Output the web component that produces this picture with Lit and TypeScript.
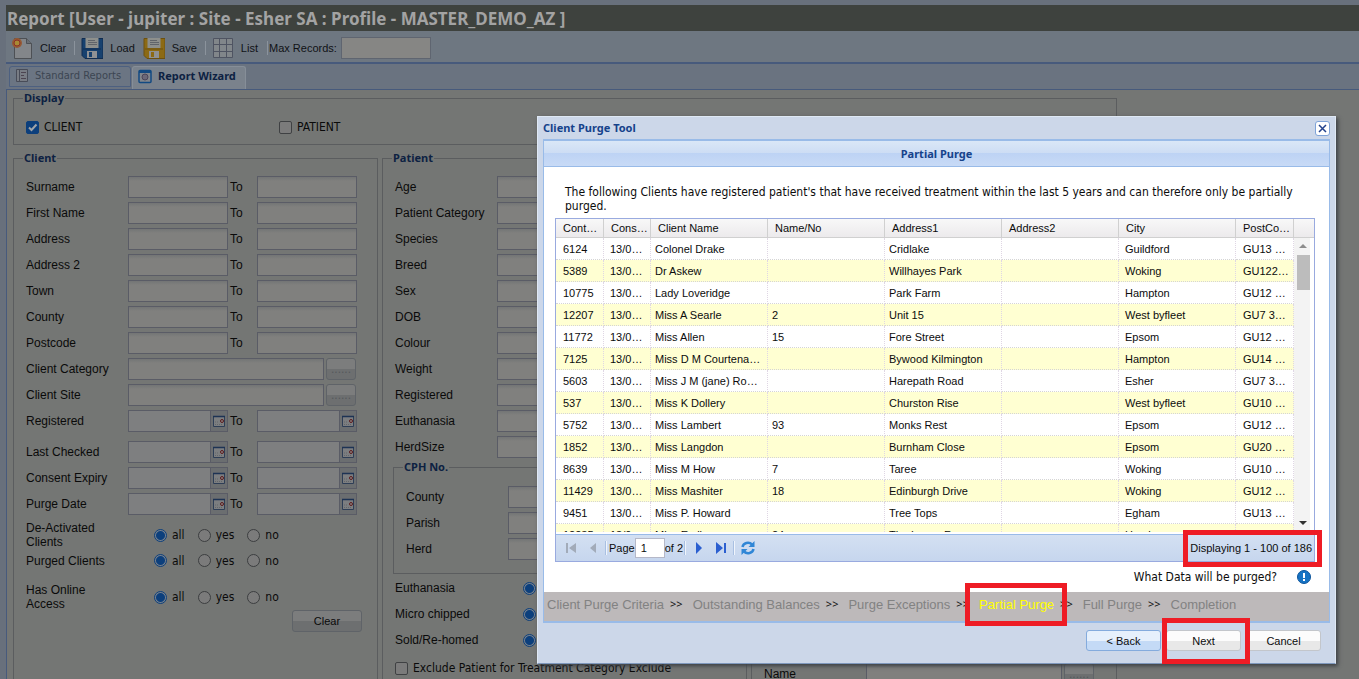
import { LitElement, html, css, svg, nothing } from "lit";
import { customElement, property, state } from "lit/decorators.js";

const CLIENTS: string[][] = [
  ["6124", "Colonel Drake", "", "Cridlake", "Guildford", "GU13 4RT"],
  ["5389", "Dr Askew", "", "Willhayes Park", "Woking", "GU122 5PL"],
  ["10775", "Lady Loveridge", "", "Park Farm", "Hampton", "GU12 6HN"],
  ["12207", "Miss A Searle", "2", "Unit 15", "West byfleet", "GU7 3RPW"],
  ["11772", "Miss Allen", "15", "Fore Street", "Epsom", "GU12 7DA"],
  ["7125", "Miss D M Courtenay-Smith", "", "Bywood Kilmington", "Hampton", "GU14 2NB"],
  ["5603", "Miss J M (jane) Robinson", "", "Harepath Road", "Esher", "GU7 3TTW"],
  ["537", "Miss K Dollery", "", "Churston Rise", "West byfleet", "GU10 8LL"],
  ["5752", "Miss Lambert", "93", "Monks Rest", "Epsom", "GU12 1EE"],
  ["1852", "Miss Langdon", "", "Burnham Close", "Epsom", "GU20 5FF"],
  ["8639", "Miss M How", "7", "Taree", "Woking", "GU10 2SA"],
  ["11429", "Miss Mashiter", "18", "Edinburgh Drive", "Woking", "GU12 9KJ"],
  ["9451", "Miss P. Howard", "", "Tree Tops", "Egham", "GU13 6WW"],
  ["12235", "Miss Emily", "24", "The Lower Farm", "Hersham", "GU12 4AB"],
];

const controls = css`
  * { box-sizing: border-box; }
  button, input { font: inherit; color: inherit; margin: 0; }
  button { cursor: pointer; }
`;

@customElement("report-toolbar")
export class ReportToolbar extends LitElement {
  static styles = [controls, css`
    :host { display: flex; align-items: center; height: 31px; padding: 3px 5px 0; background: #6e7781; color: #101216; font: 11px/14px "Liberation Sans", Arial, sans-serif; }
    .tool { display: flex; align-items: center; gap: 7px; padding: 0; border: 0; background: none; }
    .tool svg { width: 22px; height: 24px; }
    .small { width: 8px; }
    .sep { width: 1px; height: 14px; background: #8b939c; margin: 0 6px 0 8px; }
    .edge { margin: 0 1px 0 9px; }
    .max { display: flex; align-items: center; gap: 4px; }
    .max input { width: 90px; height: 22px; border: 1px solid #5f6570; background: #868684; }
  `];

  private disk(body: string, edge: string) {
    return svg`
      <path d="M1 2.500h21v20h-18l-3-3z" fill=${body} stroke=${edge}/>
      <path d="M4.500 2h13v10h-13z" fill="#8d8f8c"/>
      <path d="M7 4.500h7M7 6.500h9M7 8.500h9" stroke="#60646a"/>
      <path d="M6 15h10v7h-10z" fill="#8f9194"/>
      <path d="M8 16h3v5h-3z" fill=${body}/>
      <path d="M2 13h18" stroke=${edge}/>`;
  }

  render() {
    return html`
      <button class="tool">
        <svg viewBox="0 0 22 24">
          <path d="M3.500 2.500h12l5 5v15h-17z" fill="#83868a" stroke="#4d5055"/>
          <path d="M15.500 2.500v5h5" fill="#6b6e74" stroke="#4d5055"/>
          <circle cx="6" cy="7" r="5" fill="#955a35"/>
          <circle cx="6" cy="7" r="3" fill="#a88a35" stroke="#8c3028"/>
        </svg>Clear</button>
      <span class="sep"></span>
      <button class="tool"><svg viewBox="0 0 22 24">${this.disk("#17416f", "#102c50")}</svg>Load</button>
      <span class="small"></span>
      <button class="tool"><svg viewBox="0 0 22 24">${this.disk("#8c6a14", "#6c5010")}</svg>Save</button>
      <span class="sep"></span>
      <button class="tool">
        <svg viewBox="0 0 22 24"><path d="M1.500 2.500h19v19h-19zM1.500 8.500h19M1.500 15.500h19M7.500 2.500v19M14.500 2.500v19" fill="#81868a" stroke="#4f5462"/></svg>List</button>
      <span class="sep edge"></span>
      <label class="max">Max Records:<input type="text"></label>`;
  }
}

@customElement("radio-choice")
export class RadioChoice extends LitElement {
  @property() name = "choice";
  static styles = [controls, css`
    :host { display: flex; gap: 13px; font: 12px/14px "DejaVu Sans Condensed", Tahoma, sans-serif; }
    label { display: flex; align-items: center; gap: 5px; }
    input { appearance: none; width: 13px; height: 13px; border: 1px solid #3c3e40; border-radius: 50%; background: #7b7b7b; }
    input:checked { border-color: #0c3f7c; background: radial-gradient(circle, #0c3f7c 0 4px, #76808c 5px); }
  `];
  render() {
    return ["all", "yes", "no"].map((v, i) => html`<label><input type="radio" name=${this.name} .checked=${i === 0}>${v}</label>`);
  }
}

@customElement("report-form")
export class ReportForm extends LitElement {
  static styles = [controls, css`
    :host { display: grid; grid-template-columns: 365px 365px 366px; gap: 6px 4px; align-items: start; padding: 1px 6px; color: #0a0a0a; font: 12px/14px "Liberation Sans", Arial, sans-serif; }
    fieldset { margin: 0; min-width: 0; border: 1px solid #5b5d5f; padding: 11px 10px 0 12px; }
    legend { margin-left: -3px; padding: 0 1px; font: bold 11px/14px "Noto Sans", Tahoma, sans-serif; color: #0d2142; }
    .display { grid-column: 1 / -1; padding-top: 15px; height: 54px; }
    .checks { display: grid; grid-template-columns: 253px 1fr; font-family: "DejaVu Sans Condensed", Tahoma, sans-serif; }
    .check { display: flex; align-items: center; gap: 5px; white-space: nowrap; }
    .check input { appearance: none; flex: none; width: 13px; height: 13px; border: 1px solid #3f4143; border-radius: 2px; background: #7b7b7b; }
    .check input:checked { border-color: #0c3f7c; background: #0c3f7c url("data:image/svg+xml,%3Csvg xmlns='http://www.w3.org/2000/svg' viewBox='0 0 11 11'%3E%3Cpath d='M2 5.500l2.500 2.500 5-5.500' fill='none' stroke='%23a0a4a8' stroke-width='2'/%3E%3C/svg%3E"); }
    .exclude { font-family: "DejaVu Sans Condensed", Tahoma, sans-serif; }
    .column { height: 580px; }
    .rows { display: grid; gap: 4px; }
    .row { display: flex; align-items: center; height: 22px; }
    .row > label, .row > .name { width: 102px; flex: none; }
    .row > .exclude { width: auto; padding-top: 4px; }
    .to { width: 29px; padding-left: 2px; }
    .box { width: 100px; height: 22px; border: 1px solid #5a5c66; background: linear-gradient(#737575, #80807e 4px); }
    .wide { width: 196px; margin-right: 2px; }
    .date { display: flex; width: 100px; border: 1px solid #5a5c66; background: #7e7f80; height: 22px; }
    .date input { flex: 1; min-width: 0; border: 0; background: none; }
    .date button { width: 17px; padding: 0; border: 0; border-left: 1px solid #5a5c66; background: #6b6e70; }
    .date svg { display: block; width: 15px; height: 16px; }
    .more, .clear { border: 1px solid #5f6368; border-radius: 3px; background: linear-gradient(#7c7d7d 50%, #6d6f70 50%); padding: 0; }
    .more { width: 30px; height: 22px; color: #56595c; }
    .clear { width: 70px; height: 22px; font-size: 11px; justify-self: end; margin-right: 5px; }
    .later { margin-top: 5px; }
    .options { display: flex; align-items: center; }
    .options .name { width: 128px; padding-right: 50px; }
    .row.options .name { width: 128px; padding: 0; }
    .tight { display: grid; margin-top: 6px; }
    .tight .options { height: 28px; }
    .tight .single { height: 23px; white-space: nowrap; }
    .tight .last { height: 50px; margin-bottom: -12px; }
    .cph { margin: 2px 0 3px -2px; padding: 12px 8px 0 12px; height: 114px; width: 345px; }
    .people { height: 580px; margin-top: 7px; padding-top: 504px; }
  `];

  private to() {
    return html`<span class="to">To</span>`;
  }

  private range(label: string) {
    const id = label.replace(/\W/g, "");
    return html`<div class="row"><label for=${id}>${label}</label><input class="box" id=${id} type="text">${this.to()}<input class="box" type="text" aria-label="${label} to"></div>`;
  }

  private single(label: string) {
    const id = label.replace(/\W/g, "") + "Value";
    return html`<div class="row"><label for=${id}>${label}</label><input class="box" id=${id} type="text"></div>`;
  }

  private lookup(label: string) {
    const id = label.replace(/\W/g, "");
    return html`<div class="row"><label for=${id}>${label}</label><input class="box wide" id=${id} type="text"><button class="more" aria-label="Choose ${label}">......</button></div>`;
  }

  private date(label: string) {
    return html`<span class="date"><input type="text" aria-label=${label}><button aria-label="Pick date">
      <svg viewBox="0 0 15 16"><path d="M2.500 3.500h11v10h-11z" fill="#7c7e80" stroke="#2e3e56"/><path d="M2 3.500h12" stroke="#1d3354" stroke-width="1.500"/><path d="M4 11.500h8M4 9h4" stroke="#63666a" stroke-dasharray="1 1"/><circle cx="11" cy="8" r="1.500" fill="#8d8080" stroke="#5a1a1c"/></svg>
    </button></span>`;
  }

  private dates(label: string, extra = "") {
    return html`<div class="row ${extra}"><span class="name">${label}</span>${this.date(label)}${this.to()}${this.date(label + " to")}</div>`;
  }

  render() {
    return html`
      <fieldset class="display"><legend>Display</legend>
        <div class="checks">
          <label class="check"><input type="checkbox" checked>CLIENT</label>
          <label class="check"><input type="checkbox">PATIENT</label>
        </div>
      </fieldset>
      <fieldset class="column"><legend>Client</legend>
        <div class="rows">
          ${["Surname", "First Name", "Address", "Address 2", "Town", "County", "Postcode"].map((l) => this.range(l))}
          ${["Client Category", "Client Site"].map((l) => this.lookup(l))}
          ${this.dates("Registered")}${this.dates("Last Checked", "later")}${this.dates("Consent Expiry")}${this.dates("Purge Date")}
        </div>
        <div class="tight">
          <div class="options"><span class="name">De-Activated Clients</span><radio-choice name="active"></radio-choice></div>
          <div class="options single"><span class="name">Purged Clients</span><radio-choice name="purged"></radio-choice></div>
          <div class="options last"><span class="name">Has Online Access</span><radio-choice name="online"></radio-choice></div>
          <button class="clear">Clear</button>
        </div>
      </fieldset>
      <fieldset class="column"><legend>Patient</legend>
        <div class="rows">
          ${["Age", "Patient Category", "Species", "Breed", "Sex", "DOB", "Colour", "Weight", "Registered", "Euthanasia", "HerdSize"].map((l) => this.single(l))}
        </div>
        <fieldset class="cph"><legend>CPH No.</legend>
          <div class="rows">${["County", "Parish", "Herd"].map((l) => this.single(l))}</div>
        </fieldset>
        <div class="rows">
          ${["Euthanasia", "Micro chipped", "Sold/Re-homed"].map((l) => html`<div class="row options"><span class="name">${l}</span><radio-choice name=${l}></radio-choice></div>`)}
          <div class="row"><label class="check exclude"><input type="checkbox">Exclude Patient for Treatment Category Exclude</label></div>
        </div>
      </fieldset>
      <fieldset class="people">${this.lookup("Name")}</fieldset>`;
  }
}

@customElement("client-grid")
export class ClientGrid extends LitElement {
  static styles = [controls, css`
    :host { display: block; border: 1px solid #99aadf; color: #0c0c0c; font: 11px/14px "Liberation Sans", Arial, sans-serif; }
    .view { position: relative; height: 315px; overflow: hidden; background: #fff; border-bottom: 2px solid #fff; }
    table { width: 100%; border-collapse: separate; border-spacing: 0; table-layout: fixed; }
    th, td { overflow: hidden; white-space: nowrap; text-overflow: ellipsis; text-align: left; font-weight: normal; }
    th { height: 19px; padding: 0 0 0 7px; background: linear-gradient(#f8f8f8, #eceaec); border-right: 1px solid #d0d0d0; border-bottom: 1px solid #d0d0d0; }
    th:last-child { border-right: 0; }
    td { height: 22px; padding: 0 4px; border-right: 1px dotted #dfd6e4; border-bottom: 1px dotted #d5d5d5; }
    td:first-child, td:nth-child(8) { padding-left: 7px; }
    td:nth-child(2), td:nth-child(7) { padding-left: 6px; }
    tr:nth-child(even) td { background: #ffffd2; }
    .c1 { width: 48px; } .c2 { width: 47px; } .c3 { width: 117px; } .c8 { width: 58px; } .c9 { width: 20px; }
    .scroll { position: absolute; top: 19px; right: 0; bottom: 0; width: 20px; padding: 6px 4px 5px 2px; background: linear-gradient(90deg, #f3f3f3 16px, #fff 16px); display: flex; flex-direction: column; align-items: center; }
    .up, .down { width: 0; height: 0; border: 4px solid transparent; }
    .up { border-bottom-color: #8c8c8c; border-top: 0; margin-bottom: 7px; }
    .down { border-top-color: #303030; border-bottom: 0; margin-top: auto; margin-bottom: 2px; }
    .thumb { width: 13px; height: 35px; background: #bcbcbc; }
    .pager { display: flex; align-items: center; height: 27px; padding: 0 2px 0 4px; border-top: 1px solid #99bbe8; background: linear-gradient(#d3e0f2, #c6d6ee); }
    .nav { width: 22px; height: 20px; padding: 0; border: 0; background: none; }
    .nav svg { display: block; width: 16px; height: 16px; margin: auto; }
    .sep { width: 1px; height: 14px; background: #f0f5fc; box-shadow: -1px 0 #a9c0e2; margin: 0 2px; }
    .page { display: flex; align-items: center; }
    .page input { width: 30px; height: 20px; border: 1px solid #b5b8c8; padding: 0 5px; background: #fff; }
    .total { margin-left: auto; }
  `];

  private icon(d: string, fill: string) {
    return html`<svg viewBox="0 0 16 16"><path d=${d} fill=${fill}/></svg>`;
  }

  render() {
    return html`
      <div class="view">
        <table>
          <colgroup><col class="c1"><col class="c2"><col class="c3"><col class="c3"><col class="c3"><col class="c3"><col><col class="c8"><col class="c9"></colgroup>
          <thead><tr>${["Contact Id", "Consent Expiry", "Client Name", "Name/No", "Address1", "Address2", "City", "PostCode Area", ""].map((h) => html`<th>${h}</th>`)}</tr></thead>
          <tbody>${CLIENTS.map((c) => html`<tr><td>${c[0]}</td><td>13/05/2018</td><td>${c[1]}</td><td>${c[2]}</td><td>${c[3]}</td><td></td><td>${c[4]}</td><td>${c[5]}</td></tr>`)}</tbody>
        </table>
        <div class="scroll"><span class="up"></span><span class="thumb"></span><span class="down"></span></div>
      </div>
      <div class="pager">
        <button class="nav" aria-label="First page">${this.icon("M3 3h2v10H3zM13 3v10L6 8z", "#a2abb9")}</button>
        <button class="nav" aria-label="Previous page">${this.icon("M11 3v10L5 8z", "#a2abb9")}</button>
        <span class="sep"></span>
        <label class="page">Page<input type="text" value="1"></label><span>of 2</span>
        <span class="sep"></span>
        <button class="nav" aria-label="Next page">${this.icon("M5 2v12l6-6z", "#2b5fd0")}</button>
        <button class="nav" aria-label="Last page">${this.icon("M3 2v12l7-6zM11 3h2v10h-2z", "#2b5fd0")}</button>
        <span class="sep"></span>
        <button class="nav" aria-label="Refresh">
          <svg viewBox="0 0 16 16"><path d="M2.500 7a5.500 5 0 0 1 9.500-2.500M13.500 9a5.500 5 0 0 1-9.500 2.500" fill="none" stroke="#2f86d6" stroke-width="2.500"/><path d="M14.500 1v6h-6zM1.500 15V9h6z" fill="#2f86d6"/></svg>
        </button>
        <span class="total">Displaying 1 - 100 of 186</span>
      </div>`;
  }
}

@customElement("purge-dialog")
export class PurgeDialog extends LitElement {
  @state() private current = 3;
  static styles = [controls, css`
    :host { display: block; width: 799px; border: 1px solid #dfe8f4; border-bottom-color: #7f98bd; background: #ccd7e9; box-shadow: 2px 2px 4px #3c3f44; padding: 0 5px; font: 12px/14px "DejaVu Sans Condensed", Tahoma, sans-serif; color: #0c0c0c; }
    header { display: flex; align-items: center; justify-content: space-between; height: 22px; font: bold 11px/14px "Noto Sans", Tahoma, sans-serif; color: #15428b; }
    .close { width: 15px; height: 15px; padding: 0; border: 1px solid #7fa3d8; border-radius: 3px; background: #fff; }
    .close svg { display: block; }
    .panel { border: 1px solid #99bbe8; background: #fff; }
    h2 { margin: 0; height: 27px; border-top: 1px solid #99bbe8; border-bottom: 1px solid #99bbe8; background: linear-gradient(#dae7f7 0, #cdddf4 12px, #bdd3f4 12px, #c8daf6); text-align: center; font: bold 11px/25px "Noto Sans", Tahoma, sans-serif; color: #15428b; }
    p { margin: 0; padding: 18px 10px 5px 10px; }
    .body { padding: 0 14px 0 11px; }
    .help { display: flex; justify-content: flex-end; align-items: center; gap: 20px; height: 30px; padding-right: 4px; }
    .help svg { width: 14px; height: 14px; }
    .steps { display: flex; height: 30px; padding: 5px 3px; background: #bdb9ba; border-bottom: 1px solid #99bbe8; font: 13px/15px "Liberation Sans", Arial, sans-serif; color: #828282; white-space: nowrap; }
    .current { color: #ffff00; }
    .arrow { margin: 0 10px 0 6px; font: 11px/14px "Noto Sans", Tahoma, sans-serif; color: #111; }
    footer { display: flex; justify-content: flex-end; gap: 5px; padding: 7px 9px 12px; font: 11px/14px "Liberation Sans", Arial, sans-serif; }
    footer button { width: 75px; height: 21px; padding: 0; border: 1px solid #c3c6cb; border-radius: 3px; background: linear-gradient(#fcfcfc 50%, #e8e8e8 50%); }
    footer .hot { border-color: #84abdd; background: linear-gradient(#e6f0fc 50%, #c4daf6 50%); }
    .mark { position: absolute; border: 5px solid #ee1c25; pointer-events: none; }
    .m1 { left: 645px; top: 413px; width: 139px; height: 37px; }
    .m2 { left: 427px; top: 466px; width: 102px; height: 43px; }
    .m3 { left: 624px; top: 501px; width: 88px; height: 46px; }
  `];

  render() {
    const steps = ["Client Purge Criteria", "Outstanding Balances", "Purge Exceptions", "Partial Purge", "Full Purge", "Completion"];
    return html`
      <header>Client Purge Tool
        <button class="close" aria-label="Close"><svg width="13" height="13" viewBox="0 0 13 13"><path d="M3 3l7 7M10 3l-7 7" stroke="#24428c" stroke-width="1.500"/></svg></button>
      </header>
      <div class="panel">
        <h2>Partial Purge</h2>
        <div class="body">
          <p>The following Clients have registered patient's that have received treatment within the last 5 years and can therefore only be partially purged.</p>
          <client-grid></client-grid>
          <div class="help">What Data will be purged?
            <svg viewBox="0 0 14 14"><circle cx="7" cy="7" r="6.500" fill="#1673c4" stroke="#0d549b"/><path d="M6 3h2v5H6zM6 9h2v2H6z" fill="#fff"/></svg>
          </div>
        </div>
        <div class="steps">${steps.map((s, i) => html`${i ? html`<span class="arrow">&gt;&gt;</span>` : nothing}<span class=${i === this.current ? "current" : "step"}>${s}</span>`)}</div>
      </div>
      <footer><button class="hot">&lt; Back</button><button>Next</button><button>Cancel</button></footer>
      <span class="mark m1"></span><span class="mark m2"></span><span class="mark m3"></span>`;
  }
}

@customElement("app-root")
export class AppRoot extends LitElement {
  static styles = [controls, css`
    :host { display: block; position: relative; height: 100vh; overflow: hidden; padding: 5px 0 0 6px; background: #68707c; }
    h1 { margin: 0; height: 26px; padding: 0 1px; background: #3e423e; color: #a3a3a3; font: bold 17px/28px "Noto Sans", Tahoma, sans-serif; white-space: nowrap; }
    .tabs { display: flex; gap: 1px; height: 28px; padding: 2px 3px 0; border-top: 2px solid #475a7c; border-bottom: 1px solid #475a7c; background: #6a7380; }
    .tab { display: flex; align-items: center; gap: 6px; height: 21px; padding: 0 9px 2px 5px; border: 1px solid #4d6080; border-radius: 3px 3px 0 0; background: #6b7583; color: #3c4552; font: 11px/14px "DejaVu Sans Condensed", Tahoma, sans-serif; }
    .on { height: 23px; padding-bottom: 4px; background: #7a828c; border-color: #868e98; border-bottom: 0; color: #0d2142; font: bold 11px/14px "Noto Sans", Tahoma, sans-serif; }
    .tab svg { width: 14px; height: 15px; }
    .content { border-left: 1px solid #475a7c; background: #747674; min-height: 589px; }
    purge-dialog { position: absolute; left: 537px; top: 116px; }
  `];

  render() {
    return html`
      <h1>Report [User - jupiter : Site - Esher SA : Profile - MASTER_DEMO_AZ ]</h1>
      <report-toolbar></report-toolbar>
      <nav class="tabs">
        <button class="tab"><svg viewBox="0 0 14 15"><path d="M1.500 1.500h11v12h-11z" fill="#787c84" stroke="#484c58"/><path d="M4.500 2v11" stroke="#484c58"/><path d="M6 4.500h5M6 7.500h3M6 10.500h5" stroke="#4c4450"/></svg>Standard Reports</button>
        <button class="tab on"><svg viewBox="0 0 14 15"><rect x="1" y="1.500" width="12" height="12" rx="1" fill="#82868c" stroke="#124a82" stroke-width="1.500"/><path d="M1 3h12" stroke="#124a82" stroke-width="2"/><circle cx="7" cy="8" r="3" fill="#6b6878" stroke="#4a4458"/></svg>Report Wizard</button>
      </nav>
      <div class="content"><report-form></report-form></div>
      <purge-dialog></purge-dialog>`;
  }
}
